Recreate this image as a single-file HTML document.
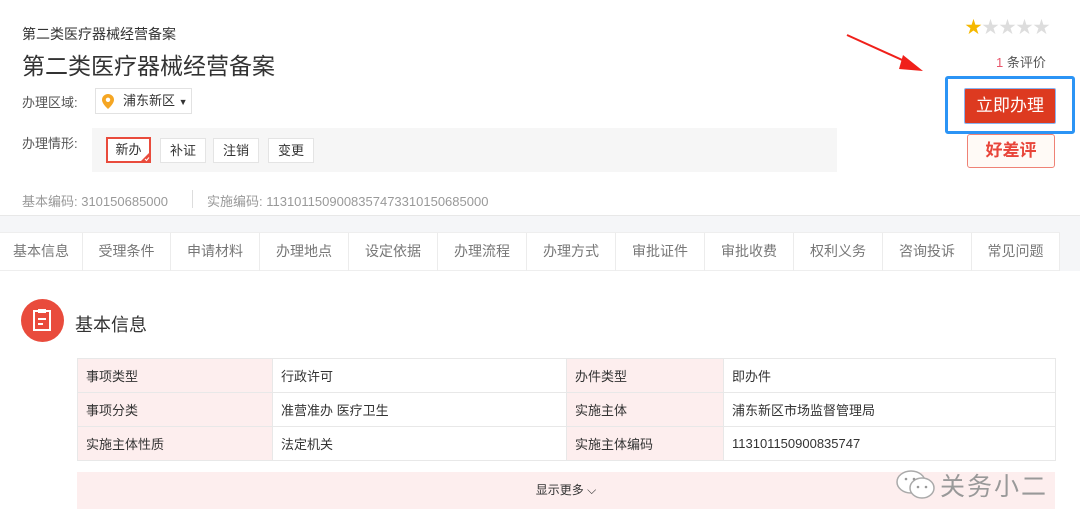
<!DOCTYPE html>
<html><head><meta charset="utf-8"><style>
*{margin:0;padding:0;box-sizing:border-box}
body{width:1080px;height:529px;overflow:hidden;background:#fff;font-family:"Liberation Sans","Noto Sans CJK SC",sans-serif;color:#333;position:relative}
.a{position:absolute}
.tag{position:absolute;top:138px;height:25px;border:1px solid #e4e4e4;background:#fff;font-size:13px;line-height:23px;text-align:center;color:#333}
.tabs{position:absolute;left:0;top:232px;width:1080px;height:39px;border-top:1px solid #eee;border-bottom:1px solid #eee;background:#fff}
.tabs span{position:absolute;top:0;height:38px;line-height:37px;font-size:14px;color:#777;border-right:1px solid #ececec;text-align:center}
table{position:absolute;left:77px;top:358px;border-collapse:collapse;font-size:13px}
td{border:1px solid #e8e8e8;height:34px;padding-left:8px;color:#333}
td.k{background:#fdeeee}
</style></head><body>
<div class="a" style="left:0;top:215px;width:1080px;height:17px;background:#f5f6f8;border-top:1px solid #e8e8e8"></div>
<div class="a" style="left:22px;top:24px;font-size:14px;color:#333">第二类医疗器械经营备案</div>
<div class="a" style="left:22px;top:47px;font-size:23px;color:#333">第二类医疗器械经营备案</div>
<div class="a" style="left:22px;top:92px;font-size:13px;color:#555">办理区域:</div>
<div class="a" style="left:95px;top:88px;width:97px;height:26px;border:1px solid #e2e2e2;font-size:13px;line-height:24px;padding-left:27px">浦东新区 <span style="font-size:9px">▼</span>
<svg class="a" style="left:6px;top:5px" width="12" height="15" viewBox="0 0 12 15"><path d="M6 0C2.7 0 0 2.6 0 5.8 0 10 6 15 6 15s6-5 6-9.2C12 2.6 9.3 0 6 0z" fill="#f5a623"/><circle cx="6" cy="5.8" r="2.2" fill="#fff"/></svg></div>
<div class="a" style="left:22px;top:133px;font-size:13px;color:#555">办理情形:</div>
<div class="a" style="left:92px;top:128px;width:745px;height:44px;background:#f6f6f6"></div>
<div class="tag" style="left:106px;width:45px;border:2px solid #e94b3c;line-height:21px;top:137px;height:26px">新办<svg class="a" style="right:-1px;bottom:-1px" width="10" height="10"><path d="M10 0V10H0Z" fill="#e94b3c"/><path d="M5 7l1.5 1.5L9 5.5" stroke="#fff" stroke-width="1" fill="none"/></svg></div>
<div class="tag" style="left:160px;width:46px">补证</div>
<div class="tag" style="left:213px;width:46px">注销</div>
<div class="tag" style="left:268px;width:46px">变更</div>
<div class="a" style="left:22px;top:191px;font-size:13px;color:#999">基本编码: 310150685000</div>
<div class="a" style="left:192px;top:190px;width:1px;height:18px;background:#ddd"></div>
<div class="a" style="left:207px;top:191px;font-size:13px;color:#999">实施编码: 1131011509008357473310150685000</div>
<div class="a" style="left:965px;top:13px;font-size:17px;letter-spacing:0px"><span style="color:#f5b800">★</span><span style="color:#ddd">★★★★</span></div>
<div class="a" style="left:996px;top:52px;font-size:13px;color:#555"><span style="color:#e8556b">1</span> 条评价</div>
<svg class="a" style="left:845px;top:33px" width="78" height="40"><path d="M2 2L66 31" stroke="#f0201a" stroke-width="2"/><path d="M58 22L78 38 54 36Z" fill="#f0201a"/></svg>
<div class="a" style="left:945px;top:76px;width:130px;height:58px;border:3px solid #2b94f5;border-radius:3px"></div>
<div class="a" style="left:964px;top:88px;width:92px;height:36px;background:#dd3a20;border:1px solid #8ab4f0;border-radius:2px;color:#fff;font-size:17px;line-height:34px;text-align:center">立即办理</div>
<div class="a" style="left:967px;top:134px;width:88px;height:34px;background:#fffaf6;border:1px solid #ef8276;border-radius:3px;color:#e8453a;font-size:17px;font-weight:bold;line-height:32px;text-align:center">好差评</div>
<div class="tabs">
<span style="left:0;width:83px">基本信息</span><span style="left:83px;width:88px">受理条件</span><span style="left:171px;width:89px">申请材料</span><span style="left:260px;width:89px">办理地点</span><span style="left:349px;width:89px">设定依据</span><span style="left:438px;width:89px">办理流程</span><span style="left:527px;width:89px">办理方式</span><span style="left:616px;width:89px">审批证件</span><span style="left:705px;width:89px">审批收费</span><span style="left:794px;width:89px">权利义务</span><span style="left:883px;width:89px">咨询投诉</span><span style="left:972px;width:88px">常见问题</span>
</div>
<div class="a" style="left:1060px;top:232px;width:20px;height:39px;background:#f5f6f8"></div>
<div class="a" style="left:21px;top:299px;width:43px;height:43px;border-radius:50%;background:#e94b3c"></div>
<svg class="a" style="left:32px;top:308px" width="21" height="24"><rect x="2" y="3" width="16" height="19" fill="none" stroke="#fff" stroke-width="2"/><rect x="6" y="1" width="8" height="4" fill="#fff"/><path d="M6 11h8M6 16h5" stroke="#fff" stroke-width="2"/></svg>
<div class="a" style="left:75px;top:311px;font-size:18px;color:#333">基本信息</div>
<table>
<tr><td class="k" style="width:195px">事项类型</td><td style="width:294px">行政许可</td><td class="k" style="width:157px">办件类型</td><td style="width:332px">即办件</td></tr>
<tr><td class="k">事项分类</td><td>准营准办 医疗卫生</td><td class="k">实施主体</td><td>浦东新区市场监督管理局</td></tr>
<tr><td class="k">实施主体性质</td><td>法定机关</td><td class="k">实施主体编码</td><td>113101150900835747</td></tr>
</table>
<div class="a" style="left:77px;top:472px;width:978px;height:37px;background:#fdeeee;text-align:center;font-size:12px;line-height:37px;color:#333">显示更多 <span style="font-size:12px">⌵</span></div>
<svg class="a" style="left:895px;top:468px" width="44" height="34"><ellipse cx="16" cy="14" rx="14" ry="11" fill="#fff" stroke="#aaa" stroke-width="1.5"/><ellipse cx="27" cy="20" rx="12" ry="10" fill="#fff" stroke="#aaa" stroke-width="1.5"/><circle cx="23" cy="19" r="1.3" fill="#999"/><circle cx="31" cy="19" r="1.3" fill="#999"/><circle cx="11" cy="11" r="1.3" fill="#999"/><circle cx="19" cy="11" r="1.3" fill="#999"/></svg>
<div class="a" style="left:940px;top:467px;font-size:25px;color:#999;letter-spacing:2px">关务小二</div>
</body></html>
